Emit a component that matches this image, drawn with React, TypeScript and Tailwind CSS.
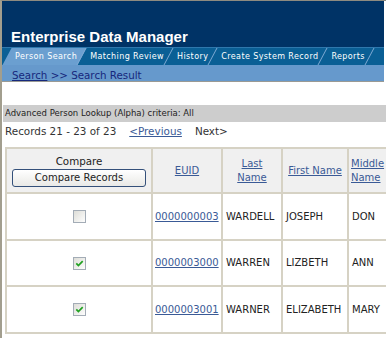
import React from 'react';

const tabs = ['Person Search', 'Matching Review', 'History', 'Create System Record', 'Reports'];

const rows = [
  { checked: false, euid: '0000000003', last: 'WARDELL', first: 'JOSEPH', middle: 'DON' },
  { checked: true, euid: '0000003000', last: 'WARREN', first: 'LIZBETH', middle: 'ANN' },
  { checked: true, euid: '0000003001', last: 'WARNER', first: 'ELIZABETH', middle: 'MARY' },
];

function Checkbox({ checked }: { checked: boolean }) {
  return (
    <svg width="13" height="13" viewBox="0 0 13 13" className="inline-block">
      <defs>
        <linearGradient id="cbfill" x1="0" y1="0" x2="1" y2="1">
          <stop offset="0" stopColor="#dcdcd6" />
          <stop offset="1" stopColor="#ffffff" />
        </linearGradient>
      </defs>
      <rect x="0.5" y="0.5" width="12" height="12" fill="url(#cbfill)" stroke="#a3acb6" />
      {checked && (
        <path d="M3.3 6.4 L5.4 8.6 L9.7 4.1" fill="none" stroke="#21a121" strokeWidth="1.7" />
      )}
    </svg>
  );
}

export default function App() {
  const font = { fontFamily: '"DejaVu Sans", Verdana, sans-serif' };

  return (
    <div
      className="w-[386px] h-[338px] overflow-hidden bg-white border-l-2 border-t border-l-[#a29e8e] border-t-[#8e8b80]"
      style={font}
    >
      {/* header */}
      <div className="w-[382px]">
        <div className="h-[46px] bg-[#003366] flex items-end pl-[9px] pb-[2px]">
          <span
            className="text-white font-bold text-[15px] leading-[17px]"
            style={{ fontFamily: '"Liberation Sans", Arial, sans-serif' }}
          >
            Enterprise Data Manager
          </span>
        </div>

        <div className="h-[18px] bg-[#0a5f95] border-t border-[#2f78ad] flex pl-[5px] overflow-hidden">
          {tabs.map((t, i) => (
            <div key={t} className="relative h-full flex items-center pl-[8px] pr-[5px]">
              {i === 0 && <div className="absolute inset-0 bg-[#6b9fd0] -skew-x-[28deg]" />}
              <div className="absolute top-0 bottom-0 right-0 w-px bg-[#7ea9d3] -skew-x-[28deg]" />
              <span className="relative text-white text-[8px] tracking-[0.4px] leading-none whitespace-nowrap">
                {t}
              </span>
            </div>
          ))}
        </div>

        <div className="h-[17px] bg-[#6699cc] border-b border-[#9a9a94] flex items-center pt-[4px] pl-[10px] text-[10.3px] leading-[13px] text-[#16287c]">
          <span className="underline">Search</span>
          <span className="whitespace-pre"> &gt;&gt; Search Result</span>
        </div>
      </div>

      {/* criteria */}
      <div className="mt-[23px] ml-px h-[17px] bg-[#cdcdcd] flex items-center pl-[2px] text-[8.5px] text-[#222]">
        Advanced Person Lookup (Alpha) criteria: All
      </div>

      <div className="h-[20px] flex items-center pl-[3px] text-[10.4px] text-[#333]">
        <span>Records 21 - 23 of 23</span>
        <span className="ml-[13px] underline text-[#3a5a96]">&lt;Previous</span>
        <span className="ml-[13px]">Next&gt;</span>
      </div>

      {/* results */}
      <table className="mt-[5px] ml-[3px] table-fixed border-separate border-spacing-0 border-l-2 border-t-2 border-[#d6d2c4] w-[404px] text-[10px]">
        <colgroup>
          <col className="w-[146px]" />
          <col className="w-[70px]" />
          <col className="w-[60px]" />
          <col className="w-[66px]" />
          <col className="w-[60px]" />
        </colgroup>
        <thead>
          <tr className="h-[45px] bg-[#f0f0f0]">
            <th className="border-r-2 border-b-2 border-[#d6d2c4] font-normal text-[#222] p-0">
              <div className="leading-[14px] text-[10.3px]">Compare</div>
              <button
                type="button"
                className="mt-px w-[134px] h-[18px] rounded-[3px] border border-[#34507a] bg-gradient-to-b from-white to-[#e9e9e6] text-[10px] text-[#222] leading-none"
              >
                Compare Records
              </button>
            </th>
            <th className="border-r-2 border-b-2 border-[#d6d2c4] font-normal p-0">
              <span className="underline text-[#3a5a96]">EUID</span>
            </th>
            <th className="border-r-2 border-b-2 border-[#d6d2c4] font-normal p-0 leading-[14px]">
              <span className="underline text-[#3a5a96]">
                Last
                <br />
                Name
              </span>
            </th>
            <th className="border-r-2 border-b-2 border-[#d6d2c4] font-normal p-0">
              <span className="underline text-[#3a5a96] whitespace-nowrap">First Name</span>
            </th>
            <th className="border-r-2 border-b-2 border-[#d6d2c4] font-normal p-0 pl-[2px] text-left leading-[14px]">
              <span className="underline text-[#3a5a96]">
                Middle
                <br />
                Name
              </span>
            </th>
          </tr>
        </thead>
        <tbody>
          {rows.map((r) => (
            <tr key={r.euid} className="h-[46.6px] text-[#222]">
              <td className="border-r-2 border-b-2 border-[#d6d2c4] text-center p-0 align-middle">
                <Checkbox checked={r.checked} />
              </td>
              <td className="border-r-2 border-b-2 border-[#d6d2c4] pl-[2px]">
                <span className="underline text-[#3a5a96]">{r.euid}</span>
              </td>
              <td className="border-r-2 border-b-2 border-[#d6d2c4] pl-[3px]">{r.last}</td>
              <td className="border-r-2 border-b-2 border-[#d6d2c4] pl-[3px]">{r.first}</td>
              <td className="border-r-2 border-b-2 border-[#d6d2c4] pl-[3px]">{r.middle}</td>
            </tr>
          ))}
        </tbody>
      </table>
    </div>
  );
}
